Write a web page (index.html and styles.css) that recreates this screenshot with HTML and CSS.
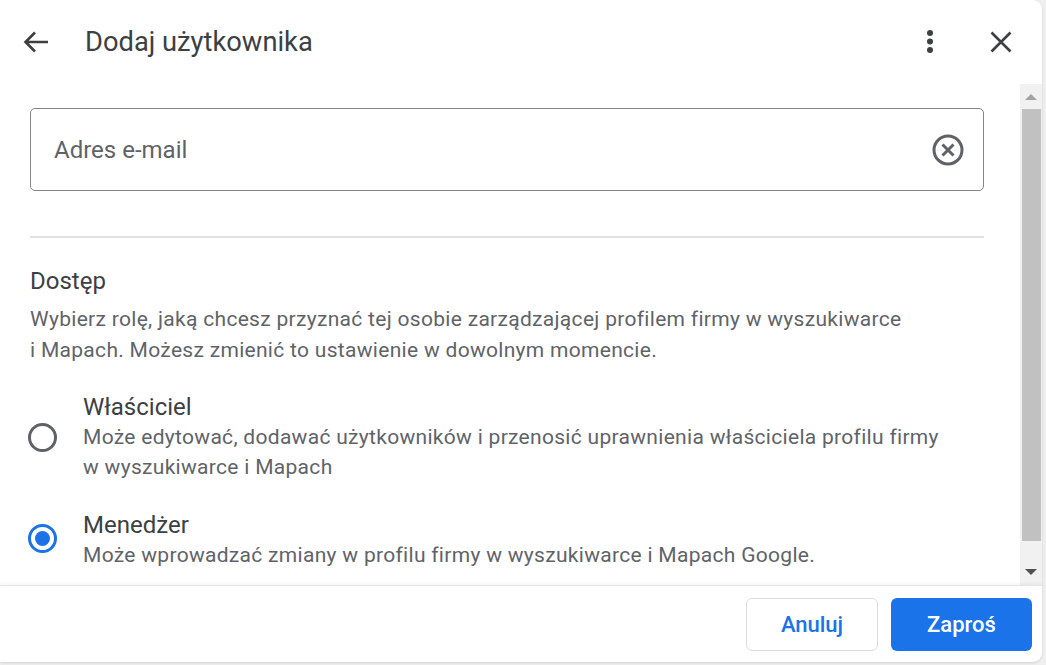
FILE: index.html
```html
<!DOCTYPE html>
<html lang="pl">
<head>
<meta charset="utf-8">
<title>Dodaj użytkownika</title>
<link rel="stylesheet" href="styles.css">
</head>
<body>
<div class="dialog">
  <header class="header">
    <button class="icon-btn back" aria-label="Wstecz">
      <svg width="26" height="22" viewBox="0 0 26 22"><path d="M25 11H2.5M12 1.5L2.5 11l9.5 9.5" fill="none" stroke="#3c4043" stroke-width="2.6"/></svg>
    </button>
    <h1 class="title">Dodaj użytkownika</h1>
    <button class="icon-btn kebab" aria-label="Więcej">
      <svg width="8" height="26" viewBox="0 0 8 26"><circle cx="4" cy="4" r="3" fill="#3c4043"/><circle cx="4" cy="12.5" r="3" fill="#3c4043"/><circle cx="4" cy="21" r="3" fill="#3c4043"/></svg>
    </button>
    <button class="icon-btn close" aria-label="Zamknij">
      <svg width="22" height="22" viewBox="0 0 22 22"><path d="M1.5 1.5l19 19M20.5 1.5l-19 19" fill="none" stroke="#3c4043" stroke-width="2.6"/></svg>
    </button>
  </header>
  <div class="body">
    <div class="content">
      <div class="field">
        <span class="placeholder">Adres e-mail</span>
        <svg class="clear" width="32" height="32" viewBox="0 0 32 32"><circle cx="16" cy="16" r="14" fill="none" stroke="#5f6368" stroke-width="3"/><path d="M10.5 10.5l11 11M21.5 10.5l-11 11" fill="none" stroke="#5f6368" stroke-width="3"/></svg>
      </div>
      <div class="divider"></div>
      <h2 class="section-title">Dostęp</h2>
      <p class="section-desc">Wybierz rolę, jaką chcesz przyznać tej osobie zarządzającej profilem firmy w wyszukiwarce<br>i Mapach. Możesz zmienić to ustawienie w dowolnym momencie.</p>
      <div class="option">
        <span class="radio"></span>
        <div class="option-text">
          <div class="option-title">Właściciel</div>
          <div class="option-desc">Może edytować, dodawać użytkowników i przenosić uprawnienia właściciela profilu firmy<br>w wyszukiwarce i Mapach</div>
        </div>
      </div>
      <div class="option">
        <span class="radio checked"></span>
        <div class="option-text">
          <div class="option-title">Menedżer</div>
          <div class="option-desc">Może wprowadzać zmiany w profilu firmy w wyszukiwarce i Mapach Google.</div>
        </div>
      </div>
    </div>
    <div class="scrollbar">
      <div class="arrow up"></div>
      <div class="track"><div class="thumb"></div></div>
      <div class="arrow down"></div>
    </div>
  </div>
  <footer class="footer">
    <button class="btn btn-outline">Anuluj</button>
    <button class="btn btn-primary">Zaproś</button>
  </footer>
</div>
</body>
</html>
```
FILE: styles.css
```css
html, body {
  margin: 0;
  padding: 0;
}
body {
  background: #efefef;
  font-family: Roboto, "Noto Sans", Arial, sans-serif;
  width: 1046px;
  height: 665px;
  overflow: hidden;
}
.dialog {
  width: 1042px;
  height: 662px;
  background: #fff;
  border-radius: 0 9px 9px 0;
  display: flex;
  flex-direction: column;
  overflow: hidden;
  box-shadow: 0 1px 3px rgba(0,0,0,0.12);
}
.header {
  height: 84px;
  flex: none;
  display: flex;
  align-items: center;
  padding: 0 30px 0 23px;
}
.icon-btn {
  background: none;
  border: 0;
  padding: 0;
  display: flex;
  align-items: center;
  justify-content: center;
  cursor: pointer;
}
.back { width: 26px; height: 26px; }
.title {
  margin: 0 0 0 36px;
  font-size: 27.3px;
  font-weight: 400;
  color: #3c4043;
  flex: 1;
  letter-spacing: 0;
}
.kebab { width: 8px; height: 26px; margin-right: 56px; }
.close { width: 22px; height: 22px; }
.body {
  flex: 1;
  min-height: 0;
  display: flex;
}
.content {
  flex: 1;
  overflow: hidden;
  padding: 24px 36px 0 30px;
}
.field {
  height: 83px;
  box-sizing: border-box;
  border: 1px solid #858585;
  border-radius: 5px;
  display: flex;
  align-items: center;
  padding: 0 19px 0 23px;
}
.placeholder {
  flex: 1;
  font-size: 24px;
  color: #5f6368;
}
.clear { display: block; }
.divider {
  height: 2px;
  background: #e0e0e0;
  margin-top: 45px;
}
.section-title {
  margin: 28px 0 0;
  font-size: 24px;
  font-weight: 400;
  color: #3c4043;
  line-height: 30px;
}
.section-desc {
  margin: 8px 0 0;
  font-size: 21px;
  line-height: 31px;
  color: #5f6368;
  letter-spacing: 0.3px;
}
.option {
  display: flex;
  align-items: center;
  margin-top: 26px;
}
.option + .option { margin-top: 28px; }
.radio {
  width: 29px;
  height: 29px;
  box-sizing: border-box;
  border: 3px solid #5f6368;
  border-radius: 50%;
  flex: none;
  margin: 0 26px 0 -2px;
  position: relative;
}
.radio.checked { border-color: #1a73e8; margin-top: -4px; }
.radio.checked::after {
  content: "";
  position: absolute;
  left: 4px;
  top: 4px;
  width: 15px;
  height: 15px;
  border-radius: 50%;
  background: #1a73e8;
}
.option-text { flex: 1; }
.option-title {
  font-size: 24px;
  line-height: 30px;
  color: #3c4043;
}
.option-desc {
  font-size: 21px;
  line-height: 30px;
  color: #5f6368;
  letter-spacing: 0.3px;
}
.scrollbar {
  width: 22px;
  flex: none;
  background: #f1f1f1;
  display: flex;
  flex-direction: column;
  align-items: center;
}
.arrow {
  width: 0;
  height: 0;
  border-left: 6px solid transparent;
  border-right: 6px solid transparent;
  flex: none;
}
.arrow.up { border-bottom: 6px solid #a3a3a3; margin: 10px 0 9px; }
.arrow.down { border-top: 6px solid #505050; margin: 9px 0 10px; }
.track { flex: 1; width: 100%; display: flex; flex-direction: column; }
.thumb {
  height: 432px;
  margin: 0 1px 0 2px;
  background: #c1c1c1;
}
.footer {
  height: 77px;
  box-sizing: border-box;
  flex: none;
  border-top: 1px solid #e6e6e6;
  box-shadow: 0 -2px 3px rgba(0,0,0,0.04);
  display: flex;
  justify-content: flex-end;
  align-items: flex-start;
  padding: 12px 10px 0 0;
  gap: 13px;
  position: relative;
}
.btn {
  height: 53px;
  border-radius: 6px;
  font-family: Roboto, Arial, sans-serif;
  font-size: 22px;
  font-weight: 500;
  cursor: pointer;
}
.btn-outline {
  width: 132px;
  background: #fff;
  border: 1px solid #dadce0;
  color: #1a73e8;
}
.btn-primary {
  width: 141px;
  background: #1a73e8;
  border: 0;
  color: #fff;
}
```
